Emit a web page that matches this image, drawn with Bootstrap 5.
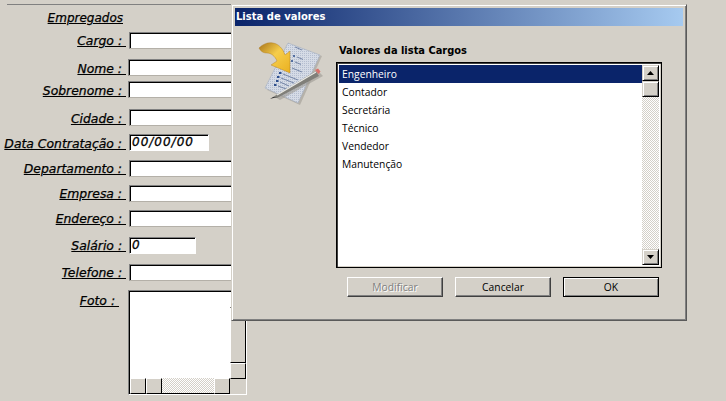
<!DOCTYPE html>
<html lang="pt">
<head>
<meta charset="utf-8">
<title>Empregados</title>
<link href="https://cdn.jsdelivr.net/npm/bootstrap@5.3.0/dist/css/bootstrap.min.css" rel="stylesheet">
<style>
html,body{width:726px;height:401px;overflow:hidden;background:#d4d0c8;margin:0}
.desk{position:relative;width:726px;height:401px;overflow:hidden;background:#d4d0c8;color:#000;font-family:"DejaVu Sans",sans-serif}
.topline{height:1px;width:225px;margin-left:7px;background:#808080;position:relative;top:4px}
.formarea{padding-top:9px;width:232px}
.frow{display:flex;align-items:flex-start;height:25px;overflow:visible}
.flabel{width:126px;flex:none;text-align:right;font-size:12.4px;font-style:italic;text-decoration:underline;line-height:16px;white-space:pre;-webkit-text-stroke:.25px #000;padding-top:1px}
.lb2{padding-top:2px}
.lbfoto{padding-top:3px;padding-right:7px}
.heading{width:123px;height:22px;font-size:12px;padding-top:0}
.finput{margin-left:3px;height:17px;flex:none;width:110px;background:#fff;border:1px solid;border-color:#808080 #d4d0c8 #b4b0a8 #808080;box-shadow:inset 1px 1px 0 #000;font-size:12px;font-style:italic;letter-spacing:1px;font-weight:500;-webkit-text-stroke:.3px #000;line-height:15px;padding-left:2px;box-sizing:border-box}
.w-date{width:80px;border-color:#808080 #fff #fff #808080}.w-sal{width:67px;border-color:#808080 #fff #fff #808080}
.nudge{margin-left:2px;width:111px}
.h27{height:27px}.h22{height:22px}.h28{height:28px}.h26{height:26px}
.fotobox{margin-left:2px;width:119px;height:105px;flex:none;background:#fff;border:1px solid;border-color:#808080 #fff #fff #808080;box-shadow:inset 1px 1px 0 #000;position:relative;box-sizing:border-box}
.sbh{position:absolute;left:1px;bottom:0;width:100px;height:16px;display:flex}
.sbtn{background:#d4d0c8;width:16px;height:16px;flex:none;border:1px solid;border-color:#fff #000 #000 #fff;box-sizing:border-box;display:flex;align-items:center;justify-content:center}
.sb-track{flex:1;background-color:#fff;background-image:conic-gradient(#d4d0c8 25%,#fff 0 50%,#d4d0c8 0 75%,#fff 0);background-size:2px 2px;border-bottom:1px solid #000}
.sbv{position:absolute;right:0;top:1px;width:16px;height:87px;display:flex;flex-direction:column}
.sbv-thumb{flex:1;width:16px;border:1px solid;border-color:#fff #000 #000 #fff;background:#d4d0c8;box-sizing:border-box}
.corner{position:absolute;right:0;bottom:0;width:16px;height:15px;background:#d4d0c8}
.dialog{position:absolute;left:231px;top:4px;width:456px;height:317px;background:#d4d0c8;border:1px solid;border-color:#d4d0c8 #5a5a5a #5a5a5a #d4d0c8;box-shadow:inset 1px 1px 0 #fff,inset -1px -1px 0 #808080;padding:3px 3px 0 3px;box-sizing:border-box;font-family:"Liberation Sans",sans-serif;font-size:11px}
.tbar{height:18px;background:linear-gradient(90deg,#0a246a,#a6caf0);color:#fff;font-family:"DejaVu Sans",sans-serif;font-size:10px;font-weight:700;line-height:17px;padding-left:1px}
.dbody{display:flex}
.iconcol{width:101px;flex:none;padding:15px 0 0 23px}
.listcol{width:326px;flex:none}
.ltitle{font-family:"DejaVu Sans",sans-serif;font-size:9.9px;font-weight:700;height:18px;padding:18px 0 0 3px;line-height:13px;box-sizing:content-box}
.lbox{width:326px;height:206px;background:#fff;border:1px solid #000;box-shadow:inset 1px 1px 0 #404040,inset -1px -1px 0 #d4d0c8;padding:2px;display:flex;box-sizing:border-box}
.litems{flex:1;min-width:0;font-size:11px}
.litem{height:18px;line-height:18px;padding-left:3px;font-family:"Open Sans",sans-serif;font-size:10.3px}
.litem.sel{background:#0a246a;color:#fff}
.vscroll{width:17px;flex:none;display:flex;flex-direction:column;background-color:#fff;background-image:conic-gradient(#d4d0c8 25%,#fff 0 50%,#d4d0c8 0 75%,#fff 0);background-size:2px 2px}
.vbtn{width:17px;height:16px;flex:none;background:#d4d0c8;border:1px solid;border-color:#d4d0c8 #000 #000 #d4d0c8;box-shadow:inset 1px 1px 0 #fff,inset -1px -1px 0 #808080;box-sizing:border-box;display:flex;align-items:center;justify-content:center}
.vgap{flex:1}
.btnrow{display:flex;gap:12px;padding-left:11px;margin-top:9px}
.wbtn{width:96px;height:20px;background:#d4d0c8;border:1px solid;border-color:#fff #404040 #404040 #fff;box-shadow:inset -1px -1px 0 #808080;border-radius:0;padding:0;font-family:"Open Sans",sans-serif;font-size:10.3px;line-height:17px;color:#000}
.wbtn.dis{color:#808080;text-shadow:1px 1px 0 #fff}
.wbtn.ok{border-color:#000;box-shadow:inset 1px 1px 0 #fff,inset -1px -1px 0 #808080}
.wbtn:hover{background:#d4d0c8;color:#000}
</style>
</head>
<body>
<div class="desk">
  <div class="topline"></div>
  <div class="formarea">
    <div class="frow h22"><div class="flabel heading">Empregados</div></div>
    <div class="frow h27"><div class="flabel">Cargo : </div><div class="finput"></div></div>
    <div class="frow h22"><div class="flabel lb2">Nome : </div><div class="finput nudge"></div></div>
    <div class="frow h28"><div class="flabel lb2">Sobrenome : </div><div class="finput nudge"></div></div>
    <div class="frow"><div class="flabel lb2">Cidade : </div><div class="finput"></div></div>
    <div class="frow h26"><div class="flabel lb2">Data Contratação : </div><div class="finput w-date">00/00/00</div></div>
    <div class="frow"><div class="flabel">Departamento : </div><div class="finput"></div></div>
    <div class="frow"><div class="flabel">Empresa : </div><div class="finput"></div></div>
    <div class="frow h27"><div class="flabel">Endereço : </div><div class="finput"></div></div>
    <div class="frow h27"><div class="flabel">Salário : </div><div class="finput w-sal">0</div></div>
    <div class="frow h26"><div class="flabel">Telefone : </div><div class="finput"></div></div>
    <div class="frow"><div class="flabel lbfoto">Foto : </div>
      <div class="fotobox">
        <div class="sbh"><div class="sbtn"></div><div class="sbtn"></div><div class="sb-track"></div><div class="sbtn"></div></div>
        <div class="sbv"><div class="sbtn"></div><div class="sbv-thumb"></div><div class="sbtn"></div></div>
        <div class="corner"></div>
      </div>
    </div>
  </div>

  <div class="dialog">
    <div class="tbar">Lista de valores</div>
    <div class="dbody">
      <div class="iconcol">
        <svg width="66" height="66" viewBox="0 0 66 66" role="img" aria-label="Lista">
          <defs>
            <linearGradient id="ag" x1="0" y1="0" x2="1" y2="1"><stop offset="0" stop-color="#a8741a"/><stop offset=".45" stop-color="#f6cd4a"/><stop offset="1" stop-color="#eab020"/></linearGradient>
            <linearGradient id="sh" x1="0" y1="0" x2="1" y2="1"><stop offset="0" stop-color="#b7b3ab"/><stop offset="1" stop-color="#99958d"/></linearGradient>
            <pattern id="pg" width="2" height="2" patternUnits="userSpaceOnUse"><rect width="2" height="2" fill="#d5dbe6"/><rect width="1" height="1" fill="#b4bdcf"/></pattern>
          </defs>
          <polygon points="31,3 64,15 42,64 9,49" fill="url(#sh)" opacity=".6"/>
          <polygon points="30,2 62,14 40,62 7,47" fill="url(#pg)" stroke="#a3acbd" stroke-width=".6"/>
          <g fill="#2d4f8e"><circle cx="36" cy="15" r="1"/><circle cx="34" cy="20" r="1"/><rect x="21" y="31" width="2.5" height="2"/><rect x="19" y="35" width="2.5" height="2"/><rect x="18" y="39" width="2.5" height="2"/><rect x="16" y="43" width="2.5" height="2"/></g>
          <g stroke="#6a7c9f" stroke-width=".9"><path d="M37 6l7 3M39 16l6 2.4M37 21l6 2.4M34 27l10 4M25 33l15 6M23 37l13 5M22 41l9 4M20 45l11 4"/></g>
          <path d="M1 7 C5 3 10 1 15 2 C21 3 25 8 27 14 L32 10 L32 32 L13 24 L19 20 C17 15 13 12 9 12 C6 12 3 11 1 7 Z" fill="url(#ag)" stroke="#a8741a" stroke-width=".4"/>
          <path d="M17 56 L60 30 L65 35 L22 59 Z" fill="#9d9a93" opacity=".6"/>
          <path d="M15 56 L58 30 L61 35 L19 57 Z" fill="#807f79"/>
          <path d="M19 54 L58 31" stroke="#ebebe6" stroke-width="1.3"/>
          <path d="M57 29l3-1.5 2.5 3-2 2.5z" fill="#d9706a"/>
          <path d="M15 56l-3 2 7-2z" fill="#333"/>
        </svg>
      </div>
      <div class="listcol">
        <div class="ltitle">Valores da lista Cargos</div>
        <div class="lbox">
          <div class="litems">
            <div class="litem sel">Engenheiro</div>
            <div class="litem">Contador</div>
            <div class="litem">Secretária</div>
            <div class="litem">Técnico</div>
            <div class="litem">Vendedor</div>
            <div class="litem">Manutenção</div>
          </div>
          <div class="vscroll">
            <div class="vbtn"><svg width="7" height="4" viewBox="0 0 7 4"><path d="M3.5 0L7 4H0z"/></svg></div>
            <div class="vbtn"></div>
            <div class="vgap"></div>
            <div class="vbtn"><svg width="7" height="4" viewBox="0 0 7 4"><path d="M0 0h7L3.5 4z"/></svg></div>
          </div>
        </div>
        <div class="btnrow">
          <button type="button" class="btn wbtn dis">Modificar</button>
          <button type="button" class="btn wbtn">Cancelar</button>
          <button type="button" class="btn wbtn ok">OK</button>
        </div>
      </div>
    </div>
  </div>
</div>
<script src="https://cdn.jsdelivr.net/npm/bootstrap@5.3.0/dist/js/bootstrap.bundle.min.js"></script>
</body>
</html>
